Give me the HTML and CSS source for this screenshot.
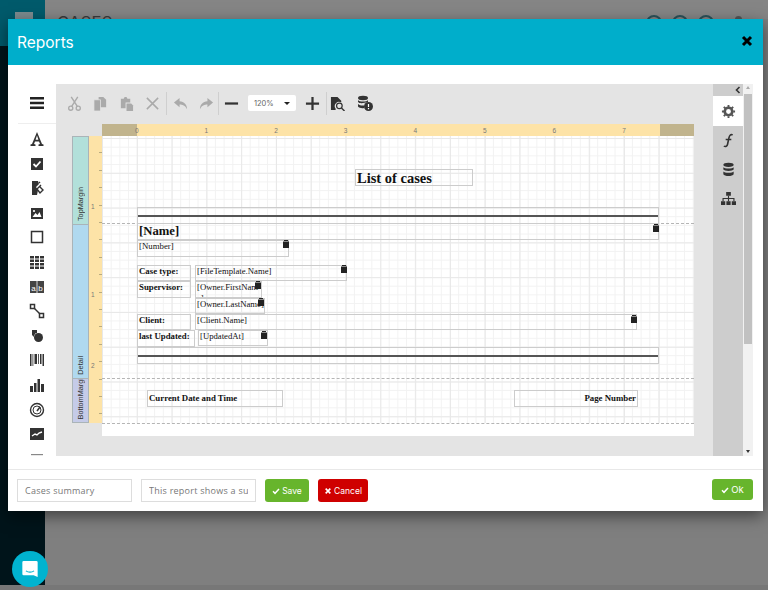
FILE: index.html
```html
<!DOCTYPE html>
<html lang="en">
<head>
<meta charset="utf-8">
<title>Reports</title>
<link rel="stylesheet" href="styles.css">
</head>
<body>
<div class="app">
  <aside class="side"><div class="side-top"><span class="side-logo"></span></div></aside>
  <header class="topbar"><span class="page-title">CASES</span>
    <span class="top-icons"><i></i><i></i><i></i><i class="top-user"></i></span>
  </header>
</div>

<section class="modal">
  <header class="modal-head">
    <h1>Reports</h1>
    <svg class="close" viewBox="0 0 12 12"><path d="M2 2l8 8M10 2l-8 8" stroke="#000" stroke-width="3"/></svg>
  </header>
  <div class="modal-body">
    <nav class="toolbox">
      <svg class="tb tb-first" viewBox="0 0 16 16"><path d="M1 2h14v2.400H1zM1 6.800h14v2.400H1zM1 11.600h14V14H1z" fill="#222"/></svg>
      <div class="tb-line"></div>
      <svg class="tb" viewBox="0 0 16 16"><path d="M8 1l5 12 1.500.5V15H9.500v-1.500L11 13l-1-2.600H6L5 13l1.500.5V15H1.500v-1.500L3 13zM8 4.500L6.600 8.800h2.800z" fill="#333"/></svg>
      <svg class="tb" viewBox="0 0 16 16"><path d="M2 2h12v12H2z" fill="#333"/><path d="M4.500 8l2.500 2.500 4.500-5" stroke="#fff" stroke-width="1.800" fill="none"/></svg>
      <svg class="tb" viewBox="0 0 16 16"><path d="M3 1h6l1 3-3 3 2 3-1 5H3z" fill="#333"/><path d="M10 2l1 1M12 5l-4 4 3 4 3-3-3-3" stroke="#333" stroke-width="1.400" fill="none"/></svg>
      <svg class="tb" viewBox="0 0 16 16"><path d="M2 3h12v11H2z" fill="#333"/><path d="M3.500 12l3-4 2 2 2-3 2 5z" fill="#fff"/><circle cx="5" cy="6" r="1.100" fill="#fff"/></svg>
      <svg class="tb" viewBox="0 0 16 16"><path d="M2.500 2.500h11v11h-11z" fill="none" stroke="#333" stroke-width="1.500"/></svg>
      <svg class="tb" viewBox="0 0 16 16"><path d="M1 2h4v2.500H1zM6 2h4v2.500H6zM11 2h4v2.500h-4zM1 5.500h4V8H1zM6 5.500h4V8H6zM11 5.500h4V8h-4zM1 9h4v2.500H1zM6 9h4v2.500H6zM11 9h4v2.500h-4zM1 12.500h4V15H1zM6 12.500h4V15H6zM11 12.500h4V15h-4z" fill="#333"/></svg>
      <svg class="tb" viewBox="0 0 16 16"><path d="M1 2h14v12H1z" fill="#444"/><path d="M8 2v12" stroke="#fff" stroke-width=".8"/><text x="4.500" y="12" font-size="8" text-anchor="middle" fill="#fff" font-family="Liberation Sans">a</text><text x="11.500" y="12" font-size="8" text-anchor="middle" fill="#fff" font-family="Liberation Sans">b</text></svg>
      <svg class="tb" viewBox="0 0 16 16"><path d="M4 4l8 8" stroke="#333" stroke-width="1.500"/><path d="M1.500 1.500h4v4h-4zM10.500 10.500h4v4h-4z" fill="#fff" stroke="#333" stroke-width="1.500"/></svg>
      <svg class="tb" viewBox="0 0 16 16"><path d="M8 2H3v5l2 2c0-2 1-4 3-4z" fill="#333"/><circle cx="9.500" cy="9.500" r="4.500" fill="#333"/></svg>
      <svg class="tb" viewBox="0 0 16 16"><path d="M1 2h1.500v12H1zM3.500 2h.8v12h-.8zM5.500 2H8v10H5.500zM9 2h.8v10H9zM11 2h1.500v10H11zM13.500 2H15v12h-1.500z" fill="#333"/></svg>
      <svg class="tb" viewBox="0 0 16 16"><path d="M1 9h3v6H1zM5 6h2.500v9H5zM8.500 2H11v13H8.500zM12 7h3v8h-3z" fill="#333"/></svg>
      <svg class="tb" viewBox="0 0 16 16"><circle cx="8" cy="8" r="6.500" fill="none" stroke="#333" stroke-width="1.400"/><circle cx="8" cy="8" r="4" fill="none" stroke="#333"/><path d="M8 9l3-4" stroke="#333" stroke-width="1.500"/></svg>
      <svg class="tb" viewBox="0 0 16 16"><path d="M1 2h14v12H1z" fill="#333"/><path d="M3 10l3-2 2 1 2-2 3-1" stroke="#fff" stroke-width="1.400" fill="none"/></svg>
      <svg class="tb" viewBox="0 0 16 16"><path d="M2 3h12v1.200H2z" fill="#888"/></svg>
    </nav>

    <div class="designer">
      <div class="workspace">
        <div class="toolbar">
          <svg class="ti" viewBox="0 0 16 16"><circle cx="4" cy="13" r="2.200" fill="none" stroke="#aaa" stroke-width="1.400"/><circle cx="12" cy="13" r="2.200" fill="none" stroke="#aaa" stroke-width="1.400"/><path d="M5 11L11.500 1M11 11L4.500 1" stroke="#aaa" stroke-width="1.500"/></svg>
          <svg class="ti" viewBox="0 0 16 16"><path d="M6 1h5l3 3v8H6z" fill="#aaa"/><path d="M1 4h7v12H1z" fill="#aaa" stroke="#e4e4e4" stroke-width=".8"/></svg>
          <svg class="ti" viewBox="0 0 16 16"><path d="M2 3h3l1-2h2l1 2h3v4H7v6H2z" fill="#aaa"/><path d="M8 8h5l2 2v6H8z" fill="#aaa"/></svg>
          <svg class="ti" viewBox="0 0 16 16"><path d="M2 2l12 12M14 2L2 14" stroke="#aaa" stroke-width="1.600"/></svg>
          <span class="sep"></span>
          <svg class="ti" viewBox="0 0 16 16"><path d="M7 2L1 7l6 5V9c3 0 6 1 8 5 0-5-3-8-8-8.500z" fill="#aaa"/></svg>
          <svg class="ti ti-r" viewBox="0 0 16 16"><path d="M9 2l6 5-6 5V9c-3 0-6 1-8 5 0-5 3-8 8-8.500z" fill="#aaa"/></svg>
          <span class="sep sep-b"></span>
          <svg class="ti ti-minus" viewBox="0 0 16 16"><path d="M1 6.800h14v2.400H1z" fill="#333"/></svg>
          <div class="zoom-select"><span>120%</span><b></b></div>
          <svg class="ti ti-plus" viewBox="0 0 16 16"><path d="M6.800 1h2.400v5.800H15v2.400H9.200V15H6.800V9.200H1V6.800h5.800z" fill="#333"/></svg>
          <span class="sep sep-c"></span>
          <svg class="ti ti-prev" viewBox="0 0 16 16"><path d="M1 1h7l4 4v2a4.500 4.500 0 00-6 6.500L6 15H1z" fill="#333"/><circle cx="10" cy="10.500" r="3" fill="none" stroke="#333" stroke-width="1.300"/><path d="M12.200 12.700L15.500 16" stroke="#333" stroke-width="1.500"/></svg>
          <svg class="ti ti-db" viewBox="0 0 16 16"><ellipse cx="6" cy="3" rx="5" ry="2.200" fill="#333"/><path d="M1 5c1 2 9 2 10 0v2c-4 1-8 2-10 0zM1 9c2 2 5 1.500 6 1.500V13c-2 .5-5 0-6-1.500z" fill="#333"/><circle cx="11.500" cy="11.500" r="4.500" fill="#333"/><path d="M11.500 9v3M11.500 13v1.200" stroke="#fff" stroke-width="1.200"/></svg>
        </div>

        <div class="surface">
          <div class="bands">
            <div class="band band-top"><span>TopMargin</span></div>
            <div class="band band-detail"><span>Detail</span></div>
            <div class="band band-bottom"><span>BottomMargin</span></div>
          </div>
          <div class="vruler">
            <span class="vt vt1">1</span><span class="vt vt2">1</span><span class="vt vt3">2</span>
          </div>
          <div class="sheet">
            <div class="hruler">
              <span class="rd rd-l"></span>
              <div class="rl">
                <span>0</span><span>1</span><span>2</span><span>3</span><span>4</span><span>5</span><span>6</span><span>7</span>
              </div>
              <span class="rd rd-r"></span>
            </div>
            <div class="page">
              <div class="grid"></div>
              <div class="dash d1"></div><div class="dash d2"></div><div class="dash d3"></div>
              <div class="it i-title">List of cases</div>
              <div class="it i-line1"><hr></div>
              <div class="it i-name">[Name]</div>
              <div class="it i-number">[Number]</div>
              <div class="it i-l i-ct">Case type:</div>
              <div class="it i-v i-ft">[FileTemplate.Name]</div>
              <div class="it i-l i-sup">Supervisor:</div>
              <div class="it i-v i-fn">[Owner.FirstName]</div>
              <div class="it i-v i-ln">[Owner.LastName]</div>
              <div class="it i-l i-cl">Client:</div>
              <div class="it i-v i-cn">[Client.Name]</div>
              <div class="it i-l i-up">last Updated:</div>
              <div class="it i-v i-ua">[UpdatedAt]</div>
              <div class="it i-line2"><hr></div>
              <div class="it i-l i-date">Current Date and Time</div>
              <div class="it i-l i-pg">Page Number</div>
              <svg class="mk m1" viewBox="0 0 6 8"><path d="M0 1.500h6V8H0zM1 0h4v1H1z" fill="#222"/></svg>
              <svg class="mk m2" viewBox="0 0 6 8"><path d="M0 1.500h6V8H0zM1 0h4v1H1z" fill="#222"/></svg>
              <svg class="mk m3" viewBox="0 0 6 8"><path d="M0 1.500h6V8H0zM1 0h4v1H1z" fill="#222"/></svg>
              <svg class="mk m4" viewBox="0 0 6 8"><path d="M0 1.500h6V8H0zM1 0h4v1H1z" fill="#222"/></svg>
              <svg class="mk m5" viewBox="0 0 6 8"><path d="M0 1.500h6V8H0zM1 0h4v1H1z" fill="#222"/></svg>
              <svg class="mk m6" viewBox="0 0 6 8"><path d="M0 1.500h6V8H0zM1 0h4v1H1z" fill="#222"/></svg>
              <svg class="mk m7" viewBox="0 0 6 8"><path d="M0 1.500h6V8H0zM1 0h4v1H1z" fill="#222"/></svg>
            </div>
          </div>
        </div>
      </div>

      <div class="tabs">
        <div class="tabs-head"><svg viewBox="0 0 6 8"><path d="M4.500 1L1.500 4l3 3" fill="none" stroke="#333" stroke-width="1.600"/></svg></div>
        <div class="tab tab-on"><svg viewBox="0 0 16 16"><circle cx="8" cy="8" r="4" fill="none" stroke="#555" stroke-width="2.800"/><path d="M8 1v14M1 8h14M3 3l10 10M13 3L3 13" stroke="#555" stroke-width="2" stroke-dasharray="2.500 9.500 2.500"/></svg></div>
        <div class="tab"><svg viewBox="0 0 16 16"><path d="M12.500 2C10 1 9 3 8.500 5L7 12c-.4 2-2 3-4 2M5 7h6" fill="none" stroke="#333" stroke-width="1.700"/></svg></div>
        <div class="tab"><svg viewBox="0 0 16 16"><ellipse cx="8" cy="3" rx="5.500" ry="2.200" fill="#333"/><path d="M2.500 5.500c1 2 10 2 11 0v2.500c-1 2-10 2-11 0zM2.500 10c1 2 10 2 11 0v3c-1 2.500-10 2.500-11 0z" fill="#333"/></svg></div>
        <div class="tab"><svg viewBox="0 0 16 16"><path d="M5.500 1h5v4h-5zM0 11h4.500v4H0zM5.750 11h4.500v4h-4.500zM11.500 11H16v4h-4.500z" fill="#333"/><path d="M8 5v6M2.200 11V8h11.600v3" fill="none" stroke="#333" stroke-width="1.200"/></svg></div>
      </div>
      <div class="scroll">
        <span class="arr arr-up"></span>
        <span class="thumb"></span>
        <span class="arr arr-down"></span>
      </div>
    </div>
  </div>

  <footer class="modal-foot">
    <input class="field" value="Cases summary">
    <input class="field" value="This report shows a summary of cases">
    <button class="btn green"><svg viewBox="0 0 12 12"><path d="M1.500 6.500L4.500 9.500 10.500 3" fill="none" stroke="#fff" stroke-width="2.200"/></svg>Save</button>
    <button class="btn red"><svg viewBox="0 0 12 12"><path d="M2.500 2.500l7 7M9.500 2.500l-7 7" stroke="#fff" stroke-width="2.400"/></svg>Cancel</button>
    <button class="btn green ok"><svg viewBox="0 0 12 12"><path d="M1.500 6.500L4.500 9.500 10.500 3" fill="none" stroke="#fff" stroke-width="2.200"/></svg>Ok</button>
  </footer>
</section>

<div class="chat"><svg viewBox="0 0 20 20"><path d="M3 1h14a1.500 1.500 0 011.500 1.500V19l-4.500-2H3a1.500 1.500 0 01-1.500-1.500v-13A1.500 1.500 0 013 1z" fill="#fff"/><path d="M5.500 12c2.500 2 6.500 2 9 0" fill="none" stroke="#00b3d0" stroke-width="1.200"/></svg></div>
</body>
</html>
```

FILE: styles.css
```css
* { box-sizing: border-box; }
html, body { margin: 0; height: 100%; overflow: hidden; }
body {
  background: #7f7f7f;
  font-family: Inter, "Open Sans", "Liberation Sans", sans-serif;
  position: relative;
}
.app { display: flex; height: 590px; border-bottom: 5px solid #777; }
.side { width: 45px; background: #00141a; flex: none; }
.side-top { height: 46px; background: #005a6b; display: flex; padding: 12px 0 0 15px; }
.side-logo { width: 18px; height: 20px; background: #7c8a8e; }
.topbar {
  flex: 1; height: 19px; background: #858585; position: relative; overflow: hidden;
  padding: 12px 0 0 12px;
}
.page-title { font-size: 16.500px; color: #3a3a3a; letter-spacing: .3px; }
.top-icons { position: absolute; right: 54px; top: 15px; display: flex; gap: 10px; }
.top-icons i { width: 16px; height: 16px; border-radius: 50%; border: 2px solid #2c5158; }
.top-icons .top-user { position: absolute; left: 89px; top: 1px; width: 7px; height: 7px; border: 0; background: #555; }

.modal {
  position: absolute; left: 8px; top: 19px; width: 755px; height: 492px;
  background: #fff; display: flex; flex-direction: column;
  box-shadow: 0 5px 15px rgba(0,0,0,.5);
}
.modal-head {
  height: 46px; background: #00aecb; flex: none;
  display: flex; align-items: center; justify-content: space-between;
  padding: 0 10px 0 9px;
}
.modal-head h1 { margin: 0; font-size: 15.500px; font-weight: 400; color: #fff; }
.close { width: 12px; height: 12px; margin-top: -3px; }

.modal-body { height: 405px; flex: none; padding: 19px 10px 0 10px; border-bottom: 1px solid #e8e8e8; display: flex; }
.toolbox {
  width: 38px; height: 372px; overflow: hidden; flex: none;
  display: flex; flex-direction: column; align-items: center;
}
.tb { width: 16px; height: 16px; flex: none; margin-top: 8.600px; }
.tb-first { margin-top: 11px; }
.tb-line { align-self: stretch; flex: none; height: 1px; margin: 12px 0 -1.600px; background: #eee; }

.designer { height: 372px; display: flex; flex: 1; }
.workspace { width: 657px; flex: none; background: #e4e4e4; display: flex; flex-direction: column; }
.toolbar { height: 40px; flex: none; display: flex; align-items: center; padding: 0 0 2px 11px; }
.ti { width: 15px; height: 15px; flex: none; margin-right: 11px; }
.sep { width: 1px; height: 23px; background: #cfcfcf; margin: 0 6px 0 -5px; flex: none; }
.sep-b { margin: 0 5px 0 -1px; }
.sep-c { margin: 0 3px 0 -1px; }
.ti-r { margin-right: 5px; }
.ti-minus { margin-right: 9px; }
.zoom-select {
  width: 48px; height: 16px; background: #fff; flex: none; border-radius: 2px;
  display: flex; align-items: center; justify-content: space-between; padding: 0 6px;
  margin-right: 9px; font-size: 7.500px; color: #666;
}
.zoom-select b { border: 3px solid transparent; border-top: 3px solid #222; border-bottom: 0; width: 0; height: 0; }
.ti-plus { margin-right: 7px; }
.ti-prev { margin-right: 12px; }
.ti-db { width: 16px; height: 16px; margin-right: 0; }

.surface { flex: 1; display: flex; padding: 0 0 0 16px; }
.bands {
  width: 17px; height: 287px; margin-top: 12px; flex: none;
  display: flex; flex-direction: column; border: 1px solid #aab4b8;
}
.band { display: flex; align-items: flex-end; justify-content: center; font: 7.300px "Liberation Sans", sans-serif; color: #333; overflow: hidden; }
.band span { writing-mode: vertical-rl; transform: rotate(180deg); white-space: nowrap; padding-top: 3px; }
.band-top { height: 88px; background: #b2e0da; border-bottom: 1px solid #aab4b8; }
.band-detail { height: 154px; background: #b0d9ef; border-bottom: 1px solid #aab4b8; }
.band-bottom { flex: 1; background: #c5cbe8; }
.vruler {
  width: 13px; height: 287px; margin-top: 12px; flex: none; position: relative;
  background: repeating-linear-gradient(#fde3a7 0 16.400px, #b8ab80 16.400px 17.400px) right top / 3px 100% no-repeat, #fde3a7;
  font: 6.500px "Liberation Sans", sans-serif; color: #777;
}
.vt { position: absolute; left: 2px; }
.vt1 { top: 67px; }
.vt2 { top: 155px; }
.vt3 { top: 226px; }
.sheet { width: 592px; flex: none; }
.hruler { display: flex; height: 12px; font: 6.500px "Liberation Sans", sans-serif; color: #777; }
.rd { background: #c1b48d; flex: none; }
.rd-l { width: 35px; }
.rd-r { flex: 1; }
.rl { width: 523px; background: #fde3a7; display: flex; flex: none; }
.rl span { width: 69.600px; flex: none; padding-top: 3px; text-indent: -2px; }
.page { position: relative; height: 299.500px; background: #fff; }
.grid {
  position: absolute; left: 0; right: 0; top: 0; height: 287px;
  background-image:
    linear-gradient(#e8e8e8 1px, transparent 1px),
    linear-gradient(90deg, #e8e8e8 1px, transparent 1px),
    linear-gradient(#f2f2f2 1px, transparent 1px),
    linear-gradient(90deg, #f2f2f2 1px, transparent 1px);
  background-size: 34.800px 34.800px, 34.800px 34.800px, 8.700px 8.700px, 8.700px 8.700px;
  background-position: 0 2px, 0 0, 0 2px, 0 0;
}
.dash { position: absolute; left: 0; right: 0; border-top: 1px dashed #b5b5b5; }
.d1 { top: 87px; }
.d2 { top: 242px; }
.d3 { top: 287px; }

.it { position: absolute; font-family: "Liberation Serif", serif; color: #111; border: 1px solid #ccc; line-height: 10px; padding-left: 1px; white-space: nowrap; overflow: hidden; }
.i-l { font-weight: 700; font-size: 8.800px; }
.i-v { font-size: 8.700px; }
.i-title { left: 253px; top: 33px; width: 118px; height: 17px; font-size: 14.500px; font-weight: 700; line-height: 16px; }
.i-line1 { left: 35px; top: 71px; width: 522px; height: 17px; padding: 0; }
.i-line2 { left: 35px; top: 211px; width: 522px; height: 17px; padding: 0; }
.it hr { margin: 7px 0 0; border: 0; height: 2px; background: #555; }
.i-name { left: 35px; top: 88px; width: 522px; height: 16px; font-size: 12.700px; font-weight: 700; line-height: 15px; border-top: 0; }
.i-number { left: 35px; top: 104px; width: 152px; height: 17px; font-size: 8.800px; }
.i-ct { left: 35px; top: 129px; width: 54px; height: 16px; }
.i-ft { left: 93px; top: 129px; width: 152px; height: 16px; }
.i-sup { left: 35px; top: 145px; width: 54px; height: 17px; }
.i-fn { left: 93px; top: 145px; width: 67px; height: 17px; line-height: 11px; white-space: normal; word-break: break-all; }
.i-ln { left: 93px; top: 162px; width: 70px; height: 16px; line-height: 11px; white-space: normal; word-break: break-all; }
.i-cl { left: 35px; top: 178px; width: 54px; height: 16px; }
.i-cn { left: 93px; top: 178px; width: 442px; height: 16px; }
.i-up { left: 35px; top: 194px; width: 58px; height: 17px; }
.i-ua { left: 96px; top: 194px; width: 70px; height: 16px; }
.i-date { left: 45px; top: 254px; width: 136px; height: 17px; line-height: 15px; }
.i-pg { left: 412px; top: 254px; width: 124px; height: 17px; line-height: 15px; text-align: right; padding-right: 1px; }
.mk { position: absolute; width: 6px; height: 8px; }
.m1 { left: 551px; top: 88px; }
.m2 { left: 181px; top: 104px; }
.m3 { left: 239px; top: 129px; }
.m4 { left: 153px; top: 145px; }
.m5 { left: 156px; top: 162px; }
.m6 { left: 529px; top: 179px; }
.m7 { left: 159px; top: 195px; }

.tabs { width: 30px; flex: none; background: #cdcdcd; display: flex; flex-direction: column; }
.tabs-head { height: 12px; display: flex; justify-content: flex-end; align-items: center; padding-right: 2px; }
.tabs-head svg { width: 6px; height: 8px; }
.tab { height: 29px; display: flex; align-items: center; justify-content: center; }
.tab svg { width: 15px; height: 15px; }
.tab-on { background: #fff; height: 30px; }
.scroll { width: 10px; flex: none; background: #f1f1f1; display: flex; flex-direction: column; align-items: center; position: relative; padding: 10px 1px 0; }
.thumb { width: 8px; height: 250px; background: #c1c1c1; }
.arr { position: absolute; left: 2.500px; width: 0; height: 0; border: 2.500px solid transparent; }
.arr-up { top: 2px; border-bottom: 3px solid #aaa; border-top: 0; }
.arr-down { bottom: 3px; border-top: 3px solid #333; border-bottom: 0; }

.modal-foot { flex: 1; display: flex; align-items: flex-start; padding: 9px 10px 0 9px; }
.field {
  width: 115px; height: 23px; flex: none; margin-right: 9px; border: 1px solid #ddd; background: #fff;
  font: 400 9px "Open Sans", Inter, sans-serif; letter-spacing: .25px; color: #777; padding: 0 7px; outline: 0;
}
.btn {
  height: 23px; border: 0; border-radius: 3px; color: #fff; flex: none; margin-right: 9px; padding: 0;
  font: 400 8.500px Inter, "Open Sans", sans-serif;
  display: flex; align-items: center; justify-content: center; gap: 2px;
}
.btn svg { width: 8px; height: 8px; }
.green { background: #67b52c; width: 44px; }
.red { background: #cf0000; width: 50px; }
.ok { margin: 0 0 0 auto; width: 41px; height: 21px; font-size: 9.500px; }

.chat {
  position: absolute; left: 12px; top: 551px; width: 36px; height: 36px; border-radius: 50%;
  background: #00b3d0; display: flex; align-items: center; justify-content: center;
}
.chat svg { width: 18px; height: 18px; }
```
